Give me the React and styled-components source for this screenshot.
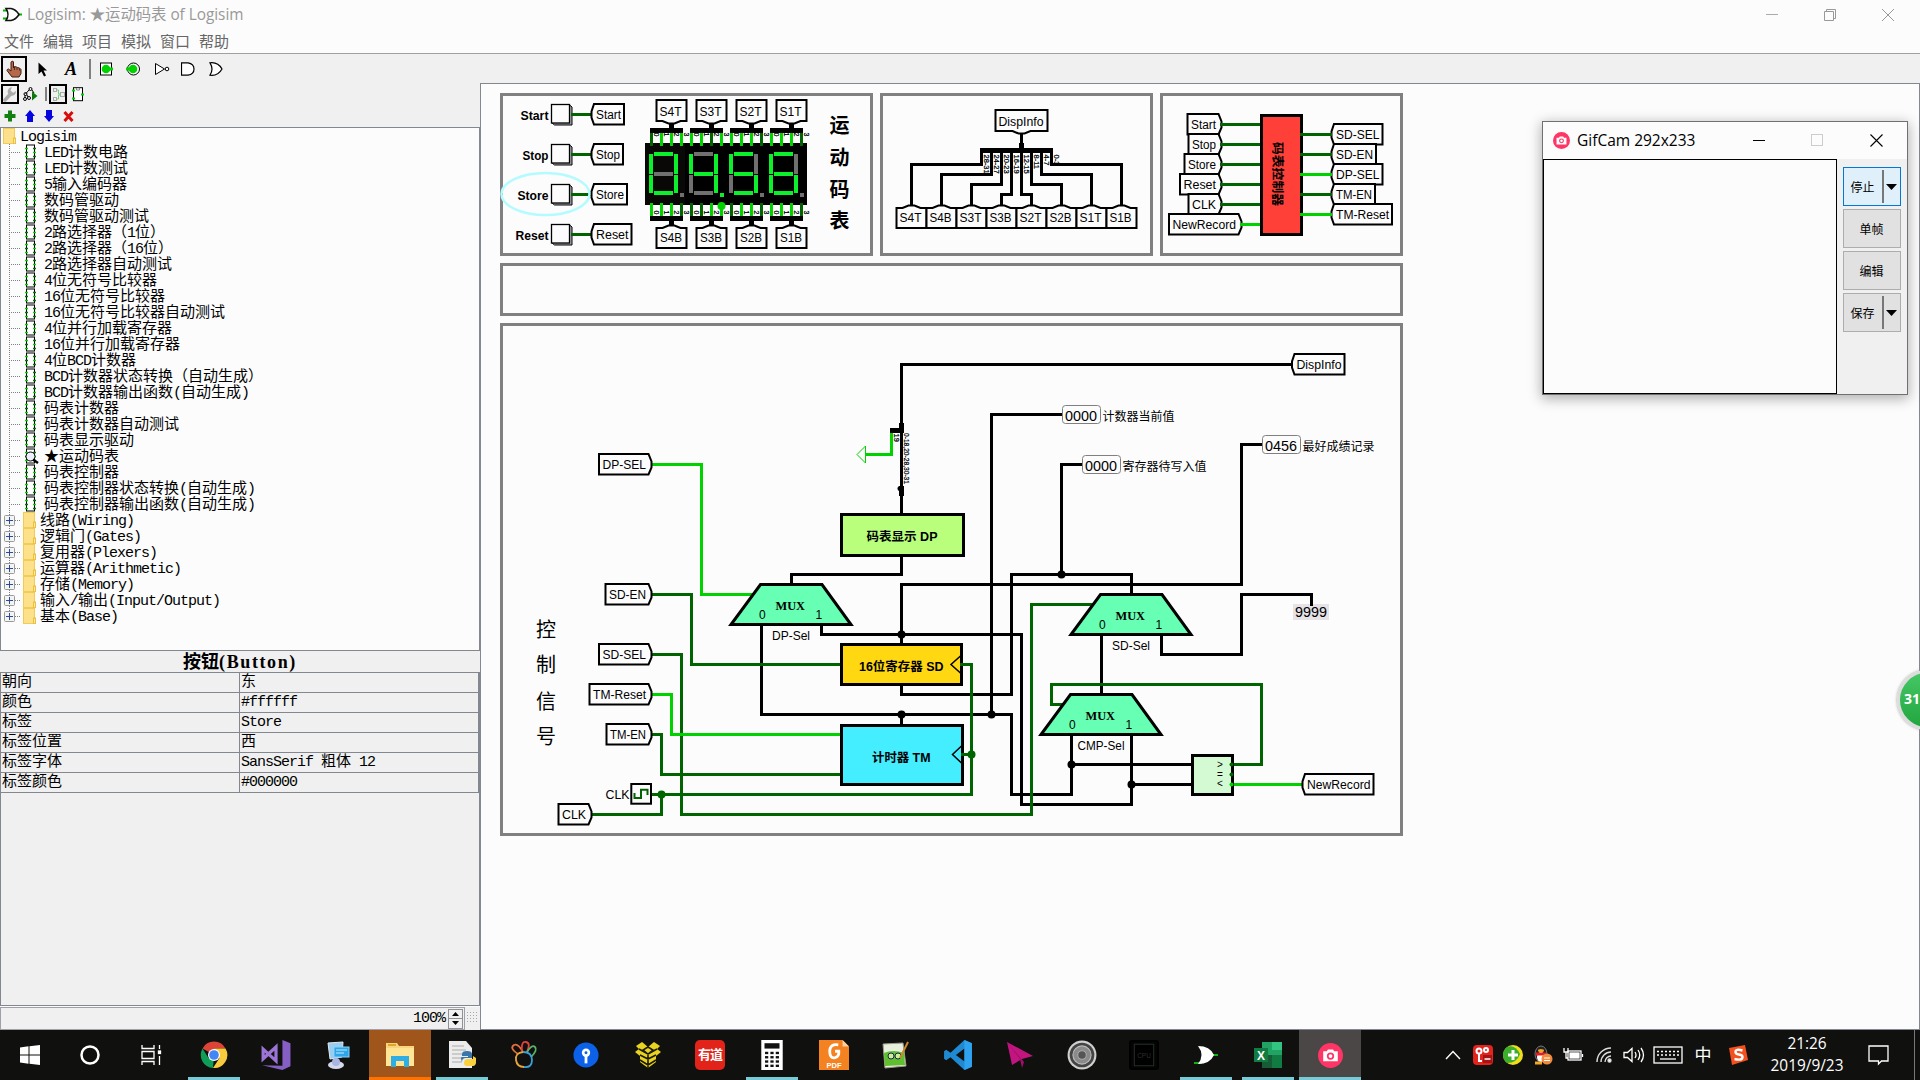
import React from "react";
import styled, { createGlobalStyle } from "styled-components";

const UI = '"Open Sans", "Noto Sans CJK SC", sans-serif';
const MONO = '"Liberation Mono", "Noto Sans CJK SC", monospace';
const SERIF = '"Liberation Serif", "Noto Sans CJK SC", serif';
const SANS = '"Liberation Sans", "Noto Sans CJK SC", sans-serif';
const DARK = "#006400";
const LIT = "#00d200";
const GREY = "#828790";

const Global = createGlobalStyle`
  * { box-sizing: border-box; }
  html, body { margin: 0; padding: 0; overflow: hidden; background: #fcfcfc; }
  svg { display: block; flex: none; }
`;

const Screen = styled.div`
  position: relative;
  width: 1920px;
  height: 1080px;
  overflow: hidden;
  display: flex;
  flex-direction: column;
  background: #fcfcfc;
  color: #000;
`;

/* ---------- window chrome ---------- */

const TitleBar = styled.header`
  height: 29px;
  padding: 0 24px 0 3px;
  display: flex;
  align-items: center;
  gap: 5px;
  font: 15.4px/29px ${UI};
  color: #999;
`;
const TitleText = styled.span`
  flex: 1;
  white-space: nowrap;
  letter-spacing: -0.04px;
`;
const Controls = styled.div`
  display: flex;
  gap: 42px;
`;
const MenuBar = styled.nav`
  height: 25px;
  padding: 0 4px;
  display: flex;
  gap: 9px;
  border-bottom: 1px solid #a0a0a0;
  font: 15px/25px ${UI};
  color: #666;
`;
const ToolBar = styled.div`
  height: 29px;
  padding: 2px 1px 1px;
  display: flex;
  align-items: center;
  background: #f0f0f0;
`;
const Work = styled.div`
  height: 947px;
  display: flex;
`;
const Side = styled.aside`
  width: 480px;
  display: flex;
  flex-direction: column;
  background: #f0f0f0;
`;
const SideBar = styled.div`
  height: 22px;
  padding-left: ${(p) => p.$pad}px;
  display: flex;
  align-items: center;
  gap: ${(p) => p.$gap || 0}px;
`;
const IconBox = styled.div`
  width: ${(p) => p.$w}px;
  height: ${(p) => p.$h}px;
  margin-right: ${(p) => p.$mr || 0}px;
  border: ${(p) => (p.$on ? "2px solid #000" : "0")};
  display: flex;
  align-items: center;
  justify-content: center;
`;
const Divider = styled.div`
  width: 2px;
  height: ${(p) => p.$h}px;
  margin-right: ${(p) => p.$mr}px;
  background: #808080;
`;

/* ---------- explorer tree ---------- */

const Tree = styled.div`
  height: 524px;
  border: 1px solid ${GREY};
  background: #fcfcfc;
  font: 15px/16px ${MONO};
`;
const TreeRow = styled.div`
  height: 16px;
  padding-left: ${(p) => p.$pad}px;
  display: flex;
  align-items: center;
  gap: ${(p) => p.$gap}px;
  white-space: nowrap;
`;
const TreeText = styled.span`
  padding-top: 3px;
  padding-left: ${(p) => p.$in || 0}px;
`;
const Latin = styled.span`
  letter-spacing: ${(p) => p.$sp || "-1px"};
`;

/* ---------- attribute table ---------- */

const AttrTitle = styled.div`
  height: 21px;
  text-align: center;
  font: bold 18px/22px ${SERIF};
`;
const AttrPane = styled.div`
  flex: 1;
  border: 1px solid ${GREY};
`;
const AttrRow = styled.div`
  display: grid;
  grid-template-columns: 239px 239px;
  height: 20px;
  border-bottom: 1px solid ${GREY};
  font: 15px/19px ${MONO};
  white-space: pre;
`;
const AttrCell = styled.div`
  padding-left: 1px;
  border-right: 1px solid ${GREY};
`;
const Status = styled.div`
  height: 24px;
  display: flex;
  border-top: 1px solid #fcfcfc;
`;
const ZoomField = styled.div`
  width: 465px;
  border: 1px solid #a0a0a8;
  padding: 1px 1px 1px 0;
  display: flex;
  align-items: center;
  justify-content: flex-end;
  gap: 3px;
  font: 15px/20px ${MONO};
`;
const Spinner = styled.div`
  width: 15px;
  height: 20px;
  display: grid;
  grid-template-rows: 1fr 1fr;
  border: 1px solid #909098;
`;
const SpinButton = styled.div`
  display: flex;
  align-items: center;
  justify-content: center;
  border-bottom: ${(p) => (p.$top ? "1px solid #909098" : "0")};
`;
const Grip = styled.div`
  width: 13px;
  margin: 4px 0 6px 1px;
  background: radial-gradient(#a8a8a8 0.8px, transparent 1px) 0 0 / 3px 3px;
`;

const CanvasPane = styled.main`
  flex: 1;
  border: 1px solid ${GREY};
  background: #fcfcfc;
  overflow: hidden;
`;

/* ---------- GifCam window ---------- */

const GifWindow = styled.section`
  position: absolute;
  left: 1542px;
  top: 121px;
  width: 366px;
  height: 274px;
  border: 1px solid #707070;
  background: #fcfcfc;
  box-shadow: 0 3px 12px 1px rgba(0, 0, 0, 0.3);
  display: flex;
  flex-direction: column;
`;
const GifTitle = styled.div`
  height: 37px;
  padding: 0 24px 0 10px;
  display: flex;
  align-items: center;
  font: 15.5px/37px ${UI};
`;
const GifName = styled.span`
  flex: 1;
  padding-left: 7px;
`;
const GifButtons = styled.div`
  display: flex;
  align-items: center;
  gap: 46px;
`;
const GifBody = styled.div`
  flex: 1;
  display: flex;
`;
const GifView = styled.div`
  width: 294px;
  border: 1px solid #000;
`;
const GifSide = styled.div`
  flex: 1;
  padding: 8px 6px;
  display: flex;
  flex-direction: column;
  gap: 3px;
  background: #f0f0f0;
`;
const GifBtn = styled.div`
  height: 39px;
  border: 1px solid ${(p) => (p.$on ? "#0078d7" : "#adadad")};
  background: ${(p) => (p.$on ? "#e0f0fb" : "#e1e1e1")};
  display: flex;
  align-items: center;
  font: 12px/37px ${SANS};
`;
const GifLabel = styled.span`
  flex: 1;
  padding: 3px 1px 0 0;
  text-align: center;
`;
const SplitMark = styled.span`
  width: 18px;
  height: 33px;
  border-left: 2px solid #777;
  display: flex;
  align-items: center;
  padding-left: 2px;
`;

const Ball = styled.div`
  position: absolute;
  left: 1897px;
  top: 670px;
  width: 60px;
  height: 60px;
  border: 3px solid #dcdcdc;
  border-radius: 50%;
  background: linear-gradient(#45c765, #22a63f);
  box-shadow: 0 0 3px #999;
  color: #fff;
  font: bold 14px/52px ${UI};
  padding-left: 4px;
`;

/* ---------- taskbar ---------- */

const TaskBar = styled.footer`
  height: 50px;
  display: flex;
  background: #10100f;
  color: #fff;
`;
const Slot = styled.div`
  width: ${(p) => p.$w || 62}px;
  padding: 0 ${(p) => (p.$fill || !p.$line ? 0 : 5)}px;
  display: flex;
`;
const SlotFace = styled.div`
  flex: 1;
  display: flex;
  align-items: center;
  justify-content: center;
  background: ${(p) => p.$fill || "transparent"};
  border-bottom: 3px solid ${(p) => p.$line || "transparent"};
  border-top: 3px solid transparent;
`;
const Tray = styled.div`
  margin-left: auto;
  width: 482px;
  display: flex;
  align-items: center;
`;
const TrayItem = styled.div`
  width: ${(p) => p.$w || 30}px;
  display: flex;
  justify-content: center;
  font: 17px/50px ${UI};
`;
const Clock = styled.div`
  width: 102px;
  text-align: center;
  font: 15.400px/22px ${UI};
`;

/* ---------- text helper ---------- */

function Mixed({ text, sp }) {
  return (
    <span>
      {text.split(/([\x20-\x7e]+)/).filter(Boolean).map((t, i) =>
        /^[\x20-\x7e]/.test(t) ? <Latin key={i} $sp={sp}>{t}</Latin> : t
      )}
    </span>
  );
}

/* ---------- small icons ---------- */

const GateLogo = () => (
  <svg width="19" height="16" viewBox="0 0 19 16">
    <path d="M0 3.500h4M0 11.500h4M16 7.500h3" stroke="#00b400" strokeWidth="2" />
    <path d="M3 1.500h5q5 1 8 6q-3 5-8 6h-5q4-6 0-12z" fill="#fff" stroke="#111" strokeWidth="1.500" />
  </svg>
);
const HandIcon = () => (
  <svg width="16" height="18" viewBox="0 0 16 18">
    <path d="M5.500 1.500q1.500-1 2 .5v6l1-1.500 2 .5 1 0.500 2 .5 1.500 1.500v4l-2 3.500h-7l-5-6.500q0-1.500 1.500-1.500l2.500 2v-9z" fill="#b5694a" stroke="#3d1c10" />
    <path d="M8.500 7v3M11 7.500v2.500M13.500 8.500v2" stroke="#3d1c10" strokeWidth=".8" />
  </svg>
);
const ArrowIcon = () => (
  <svg width="10" height="15" viewBox="0 0 10 15"><path d="M0.500 0.500V12L3.500 9.500 6 14.500 8 13.500 5.500 8.500H9z" /></svg>
);
const LetterA = styled.span`
  font: italic bold 18px/20px "Liberation Serif", serif;
`;
const PinIcon = ({ round }) => (
  <svg width="15" height="14" viewBox="0 0 15 14">
    {round ? <circle cx="7.500" cy="7" r="6" fill="#fff" stroke="#000" /> : <rect x="1.500" y="1" width="11" height="12" fill="#fff" stroke="#000" />}
    <circle cx="7" cy="7" r="4.300" fill={LIT} />
    <path d={round ? "M0 7h5" : "M8 7h6"} stroke={LIT} strokeWidth="3" />
  </svg>
);
const NotIcon = () => (
  <svg width="15" height="14" viewBox="0 0 15 14">
    <path d="M.5 1.500V12.500L9.500 7z" fill="#fff" stroke="#000" /><circle cx="12" cy="7" r="1.800" fill="#fff" stroke="#000" />
  </svg>
);
const AndIcon = () => (
  <svg width="14" height="14" viewBox="0 0 14 14"><path d="M.5 .8H7q6 1 6 6.200t-6 6.200H.5z" fill="#fff" stroke="#000" strokeWidth="1.200" /></svg>
);
const OrIcon = () => (
  <svg width="14" height="14" viewBox="0 0 14 14"><path d="M1 .8q8-1 12 6.200q-4 7.200-12 6.200q4-6.200 0-12.400z" fill="#fff" stroke="#000" strokeWidth="1.200" /></svg>
);
const WrenchIcon = () => (
  <svg width="14" height="15" viewBox="0 0 14 15">
    <path d="M2 13L8 6.500" stroke="#aaa" strokeWidth="3.500" strokeLinecap="round" />
    <path d="M13 4a4.200 4.200 0 1 1-4-3.700L7.500 3.500l2.500 2.500z" fill="#aaa" />
  </svg>
);
const SimIcon = () => (
  <svg width="15" height="15" viewBox="0 0 15 15" fill="none" stroke="#000">
    <path d="M6 3L2.500 7M9 3l2 3M4 8l1 2M2 8v3" />
    <circle cx="7.500" cy="2" r="1.500" /><circle cx="2.500" cy="7" r="1.500" /><circle cx="2" cy="12" r="1.500" /><circle cx="6" cy="11" r="1.500" />
    <path d="M9 4.500l5.500 4.500-5.500 4.500z" fill="#0a7a0a" stroke="none" />
  </svg>
);
const LayoutIcon = () => (
  <svg width="13" height="15" viewBox="0 0 13 15" fill="none" stroke="#aaa">
    <rect x="1.500" y="1.500" width="3" height="3" /><rect x="1.500" y="10.500" width="3" height="3" /><rect x="8.500" y="5.500" width="4" height="4" />
    <path d="M4.500 3h2v4h2M4.500 12h2v-4h2" stroke="#7c7" />
  </svg>
);
const ChipIcon = () => (
  <svg width="13" height="15" viewBox="0 0 13 15">
    <rect x="1.500" y=".7" width="9" height="13" fill="#fff" stroke="#000" /><path d="M4.500 1v2h3V1" fill="none" stroke="#888" />
    <path d="M0 3.500h3M0 11.500h3M9 7.500h3" stroke={LIT} strokeWidth="2" />
  </svg>
);
const PlusIcon = () => <svg width="12" height="12" viewBox="0 0 12 12"><path d="M4 .5h4V4h3.500v4H8v3.500H4V8H.5V4H4z" fill="#118011" /></svg>;
const UpIcon = ({ down }) => (
  <svg width="10" height="12" viewBox="0 0 10 12"><path d={down ? "M2 0h6v6h2l-5 6-5-6h2z" : "M5 0l5 6H8v6H2V6H0z"} fill="#0505e0" /></svg>
);
const CrossIcon = () => <svg width="11" height="11" viewBox="0 0 11 11"><path d="M1.500 1l8 9M9.500 1l-8 9" stroke="#d80c0c" strokeWidth="3" /></svg>;

const Folder = () => (
  <svg width="13" height="16" viewBox="0 0 13 16">
    <rect x=".5" y=".5" width="11" height="15" fill="#fce08a" stroke="#f2ca55" /><rect x="10.500" y="10" width="2" height="5.500" fill="#fce9a8" stroke="#ecc040" />
  </svg>
);
const Guide = ({ end, plus }) => (
  <svg width="19" height="16" viewBox="0 0 19 16">
    <path d={end ? "M7.500 0V8" : "M7.500 0V16"} stroke="#808080" strokeDasharray="1 1" />
    <path d="M9 8.500H18" stroke="#808080" strokeDasharray="1 1" />
    {plus && (
      <g>
        <rect x="2.500" y="3.500" width="10" height="10" rx="1" fill="#f4f4f4" stroke="#9a9a9a" />
        <path d="M4 8.500h7M7.500 5v7" stroke="#2c4a9c" />
      </g>
    )}
  </svg>
);
const Circuit = ({ view }) => (
  <svg width="15" height="16" viewBox="0 0 15 16">
    <rect x="2.500" y="1" width="8" height="14" fill="#fff" stroke="#000" />
    <path d="M1 4.500h3M1 12.500h3M9 8.500h3" stroke={LIT} strokeWidth="1.500" />
    <path d="M1 8.500h3M9 4.500h3M9 12.500h3" stroke="#087008" strokeWidth="1.500" />
    {view && <g><circle cx="6.500" cy="8.500" r="4.500" fill="#eef" stroke="#000" /><path d="M9 11.500l5 3.500" stroke="#000" strokeWidth="2.400" /></g>}
  </svg>
);
const Tri = ({ up, w = 7, h = 4 }) => (
  <svg width={w} height={h} viewBox="0 0 8 4" preserveAspectRatio="none"><path d={up ? "M0 4L4 0L8 4z" : "M0 0L4 4L8 0z"} /></svg>
);

const WinMin = () => <svg width="12" height="12"><path d="M0 5.500H12" stroke="currentColor" /></svg>;
const CamIcon = ({ s }) => (
  <svg width={s} height={s} viewBox="0 0 24 24">
    <circle cx="12" cy="12" r="12" fill="#ff3566" />
    <path d="M5 8h3.500l1-1.800h5l1 1.800H19v9.500H5z" fill="#fff" /><circle cx="12" cy="12.500" r="3.500" fill="#ff3566" /><circle cx="12" cy="12.500" r="1.800" fill="#fff" />
  </svg>
);

/* ---------- circuit parts ---------- */

const Wire = ({ d, c = "#000", w = 3 }) => <path d={d} stroke={c} strokeWidth={w} fill="none" shapeRendering="crispEdges" />;
const Dot = ({ x, y, c = "#000" }) => <circle cx={x} cy={y} r="4" fill={c} />;
const T = ({ x, y, w, s = 12, b, f = SANS, children, a = "start", fill = "#000" }) => (
  <text x={x} y={y} fontFamily={f} fontSize={s} fontWeight={b ? "bold" : "normal"} textAnchor={a} fill={fill}
    textLength={w} lengthAdjust="spacingAndGlyphs">{children}</text>
);
const Tiny = ({ x, y, w, s = 7.500, children }) => (
  <text transform={`translate(${x} ${y}) rotate(90)`} fontFamily={SANS} fontSize={s} stroke="#000" strokeWidth=".25"
    textLength={w} lengthAdjust="spacingAndGlyphs">{children}</text>
);

const LABEL_W = {
  Start: 25, Stop: 24, Store: 28, Reset: 32.5, DispInfo: 45, "SD-SEL": 43.5, "SD-EN": 37,
  "DP-SEL": 43.5, "TM-EN": 36, "TM-Reset": 53, CLK: 24, NewRecord: 63.5,
};

function Tunnel({ x, y, dir, label, hw = 15, top }) {
  const w = LABEL_W[label] || 22;
  const o = { fill: "#fcfcfc", stroke: "#000", strokeWidth: 2 };
  if (dir === "w") {
    const r = x + w + 8;
    return (
      <g>
        <path d={`M${x + 3} ${y - 10.500}H${r}V${y + 10}H${x + 3}L${x + .5} ${y + 3}V${y - 3}Z`} {...o} />
        <T x={x + 5} y={y + 4.500} w={w}>{label}</T>
      </g>
    );
  }
  if (dir === "e") {
    const l = x - w - 9;
    return (
      <g>
        <path d={`M${x - 3} ${y - 10.500}H${l}V${y + 10}H${x - 3}L${x} ${y + 3}V${y - 3}Z`} {...o} />
        <T x={x - w - 5.500} y={y + 4.500} w={w}>{label}</T>
      </g>
    );
  }
  const s = dir === "n" ? 1 : -1;
  const near = y + s * 3.500;
  const far = y + s * (dir === "n" ? 23.500 : 24.500);
  return (
    <g>
      <path d={`M${x - hw} ${near}V${far}H${x + hw}V${near}H${x + 9}L${x + 3} ${y + s}H${x - 3}L${x - 9} ${near}Z`} {...o} />
      <T x={x - w / 2 - (top ? 1 : .5)} y={dir === "n" ? y + 17.500 : y - 8.500} w={w}>{label}</T>
    </g>
  );
}

const SEG = [
  [9, 9, 19, 4], [29, 11, 4, 19.500], [29, 32, 4, 18], [9, 48, 19, 4], [4, 32, 4, 18], [4, 11, 4, 19.500], [9, 28.700, 19, 4],
];
const DIGITS = [
  { on: [1, 1, 1, 1, 1, 1, 0], t: [0, 1, 1, 1], b: [1, 1, 1, 0] },
  { on: [0, 1, 1, 0, 0, 1, 1], dot: 1, t: [1, 1, 0, 1], b: [0, 0, 1, 1] },
  { on: [1, 0, 1, 1, 0, 1, 1], t: [1, 1, 1, 0], b: [0, 1, 1, 0] },
  { on: [1, 0, 1, 1, 1, 1, 1], t: [1, 1, 1, 0], b: [1, 1, 1, 0] },
];

function Digit({ i }) {
  const d = DIGITS[i];
  const x = 645 + i * 40;
  const c = x + 26.500;
  return (
    <g>
      <rect x={x} y="143" width="42" height="62" fill={i ? "#000" : "#0a0806"} />
      {SEG.map((s, k) => <rect key={k} x={x + s[0]} y={143 + s[1]} width={s[2]} height={s[3]} fill={d.on[k] ? "#0cf02c" : "#707070"} shapeRendering="crispEdges" />)}
      <rect x={x + 35} y="193" width="4" height="4" fill={d.dot ? "#0cf02c" : "#707070"} />
      <rect x={x + 5} y="128" width="33" height="5" /><rect x={x + 24} y="124" width="5" height="5" />
      <rect x={x + 5} y="216" width="33" height="5" /><rect x={x + 24} y="220" width="5" height="5" />
      {[0, 1, 2, 3].map((k) => (
        <g key={k}>
          <Wire d={`M${x + 6.500 + k * 10} 133V146`} c={d.t[k] ? LIT : DARK} />
          <Wire d={`M${x + 6.500 + k * 10} 203V216`} c={d.b[k] ? LIT : DARK} />
          <Tiny x={x + 9} y={132.500} s={7}>{k === 0 ? "0" : ""}</Tiny>
          {k > 0 && <Tiny x={x + 9 + k * 10} y={132.500} s={7}>{k}</Tiny>}
          <Tiny x={x + 9 + k * 10} y={210.500} s={7}>{k}</Tiny>
        </g>
      ))}
      <Tunnel x={c} y={124.500} dir="s" label={`S${4 - i}T`} top />
      <Tunnel x={c} y={224.500} dir="n" label={`S${4 - i}B`} />
    </g>
  );
}

const Button3D = ({ y, label, w }) => (
  <g>
    <T x={548.500 - w} y={y + 5} w={w} b>{label}</T>
    <path d={`M569 ${y - 10}l3 2.500V${y + 10.500}H554.500l-3-2.500z`} fill="#a8a8b0" stroke="#000" strokeWidth="1" />
    <rect x="551.500" y={y - 10} width="18" height="18.500" fill="#fcfcfc" stroke="#000" strokeWidth="1.300" />
    <Wire d={`M571 ${y}H592`} c={DARK} />
    <Tunnel x={591} y={y} dir="w" label={label} />
  </g>
);

const Mux = ({ x, y, label, lw }) => (
  <g>
    <path d={`M${x - 30.500} ${y}H${x + 31}L${x + 60} ${y + 40}H${x - 60}Z`} fill="#66ffb3" stroke="#000" strokeWidth="3" />
    <T x={x - 15.500} y={y + 25} w={29.500} f='"Liberation Serif", serif' b>MUX</T>
    <T x={x - 32} y={y + 34.500}>0</T>
    <T x={x + 24.500} y={y + 34.500}>1</T>
    <T x={x - lw / 2} y={y + 55} w={lw}>{label}</T>
  </g>
);

const Block = ({ x, y, w, h, fill, label, tx, tw, ty }) => (
  <g>
    <rect x={x + 1.500} y={y + 1.500} width={w - 3} height={h - 3} fill={fill} stroke="#000" strokeWidth="3" shapeRendering="crispEdges" />
    {label && <T x={tx} y={ty} w={tw} b>{label}</T>}
  </g>
);

const Probe = ({ x, y, v, label, w }) => (
  <g>
    <rect x={x + .5} y={y + .5} width="38" height="18" rx="3" fill="#fcfcfc" stroke="#808080" />
    <T x={x + 3} y={y + 15.500} w={32} s={14}>{v}</T>
    <T x={x + 40.500} y={y + 16} w={w}>{label}</T>
  </g>
);

const Frame = ({ x, y, r, b }) => (
  <rect x={x} y={y} width={r - x} height={b - y} fill="none" stroke="#808080" strokeWidth="3" shapeRendering="crispEdges" />
);

const SPLIT = ["28-31", "24-27", "20-23", "16-19", "12-15", "8-11", "4-7", "0-3"];
const SPLIT_OUT = ["S4T", "S4B", "S3T", "S3B", "S2T", "S2B", "S1T", "S1B"];

function CircuitCanvas() {
  return (
    <svg width="1438" height="945" viewBox="481 84 1438 945">
      <Frame x={501.500} y={94.500} r={871.500} b={254.500} />
      <Frame x={881.500} y={94.500} r={1151.500} b={254.500} />
      <Frame x={1161.500} y={94.500} r={1401.500} b={254.500} />
      <Frame x={501.500} y={264.500} r={1401.500} b={314.500} />
      <Frame x={501.500} y={324.500} r={1401.500} b={834.500} />

      <Button3D y={114.500} label="Start" w={28} />
      <Button3D y={154.500} label="Stop" w={26} />
      <Button3D y={194.500} label="Store" w={31} />
      <Button3D y={234.500} label="Reset" w={33} />
      <ellipse cx="545.500" cy="194" rx="44" ry="21" fill="none" stroke="#b4fbff" strokeWidth="2.500" />
      {[0, 1, 2, 3].map((i) => <Digit key={i} i={i} />)}
      <Dot x={721.500} y={206} c={LIT} />
      {["运", "动", "码", "表"].map((t, i) => <T key={t} x={839.500} y={[133, 165, 197, 228][i]} s={20} b a="middle">{t}</T>)}

      <Wire d="M1021.500 134V150" /><rect x="1019" y="143" width="5" height="6" />
      <rect x="980" y="148" width="73" height="5" />
      {SPLIT.map((t, i) => {
        const x = 981.500 + i * 10;
        const o = 911.500 + i * 30;
        const y = i < 4 ? 164.500 + i * 10 : 194.500 - (i - 4) * 10;
        return (
          <g key={t}>
            <Wire d={`M${x} 150V${y}H${o}V205`} />
            <Tiny x={x + 2.500} y={154.500}>{t}</Tiny>
          </g>
        );
      })}
      {SPLIT_OUT.map((t, i) => <Tunnel key={t} x={911.500 + i * 30} y={204.500} dir="n" label={t} top />)}
      <Tunnel x={1021.500} y={134.500} dir="s" label="DispInfo" hw={26} />

      {["Start", "Stop", "Store", "Reset", "CLK"].map((t, i) => (
        <g key={t}>
          <Tunnel x={1221.500} y={124.500 + i * 20} dir="e" label={t} />
          <Wire d={`M1220 ${124.500 + i * 20}H1261`} c={DARK} />
        </g>
      ))}
      <Tunnel x={1241.500} y={224.500} dir="e" label="NewRecord" />
      <Wire d="M1240 224.500H1261" c={LIT} />
      {["SD-SEL", "SD-EN", "DP-SEL", "TM-EN", "TM-Reset"].map((t, i) => (
        <Tunnel key={t} x={1331} y={134.500 + i * 20} dir="w" label={t} />
      ))}
      <rect x="1261.500" y="115.500" width="40" height="119" fill="#ff4038" stroke="#000" strokeWidth="3" />
      {[DARK, DARK, LIT, DARK, LIT].map((c, i) => <Wire key={i} d={`M1300 ${134.500 + i * 20}H1332`} c={c} />)}
      <text transform="translate(1273 142) rotate(90)" fontFamily={SANS} fontSize="12.500" fontWeight="bold" textLength="64" lengthAdjust="spacingAndGlyphs">码表控制器</text>

      <Wire d="M901.500 424V364.500H1291.500" />
      <Wire d="M901.500 430V513" />
      <rect x="899" y="423" width="5" height="10" /><rect x="890" y="428" width="14" height="5" />
      <rect x="899" y="486" width="5" height="10" /><circle cx="900" cy="488.500" r="2.500" />
      <Wire d="M891.500 433V454.500H866" c={LIT} />
      <path d="M857 454.500L865.500 446V463Z" fill="#fcfcfc" stroke={LIT} />
      <Tiny x={894} y={433.500}>19</Tiny>
      <Tiny x={904} y={433} w={51}>0-18,20-28,30-31</Tiny>
      <Tunnel x={1291.500} y={364.500} dir="w" label="DispInfo" />

      <Wire d="M901.500 556V574.500H791.500V584" />
      <Wire d="M761.500 625V714.500H1011.500V794.500H1071.500V735" />
      <Wire d="M821.500 625V634.500H1021.500V804.500H1131.500V735" />
      <Wire d="M901.500 645V584.500H1241.500V444.500H1263" />
      <Wire d="M901.500 685V694.500H1011.500V574.500H1131.500V594" />
      <Wire d="M1061.500 574.500V464.500H1083" />
      <Wire d="M991.500 714.500V414.500H1063" />
      <Wire d="M901.500 714V726" />
      <Wire d="M1161.500 635V654.500H1241.500V594.500H1311.500V606" />
      <Wire d="M1101.500 635V694" />
      <Wire d="M1071.500 764.500H1192" /><Wire d="M1131.500 784.500H1192" />

      <Wire d="M650 464.500H701.500V594.500H754" c={LIT} />
      <Wire d="M650 594.500H691.500V664.500H841" c={DARK} />
      <Wire d="M650 654.500H681.500V814.500H1031.500V604.500H1093" c={DARK} />
      <Wire d="M650 694.500H671.500V734.500H841" c={LIT} />
      <Wire d="M650 734.500H661.500V774.500H841" c={DARK} />
      <Wire d="M650 794.500H971.500V664.500H961" c={DARK} />
      <Wire d="M661.500 794.500V814.500H590" c={DARK} />
      <Wire d="M1064 704.500H1051.500V684.500H1261.500V764.500H1231" c={DARK} />
      <Wire d="M1232 784.500H1302" c={LIT} />

      <Mux x={791} y={584.500} label="DP-Sel" lw={38} />
      <Mux x={1131} y={594.500} label="SD-Sel" lw={38} />
      <Mux x={1101} y={694.500} label="CMP-Sel" lw={47} />
      <Block x={840} y={513} w={125} h={44} fill="#b9ff7c" label="码表显示 DP" tx={866.500} tw={71} ty={541} />
      <Block x={840} y={643} w={123} h={43} fill="#ffd812" label="16位寄存器 SD" tx={859} tw={84.500} ty={671} />
      <Block x={840} y={724} w={124} h={62} fill="#44eeff" label="计时器 TM" tx={872} tw={58.500} ty={761.500} />
      <path d="M961 655.500L951 664.500L961 673.500M962 745.500L952.500 754.500L962 763.500" fill="none" stroke="#000" strokeWidth="1.500" />
      <Wire d="M960 664.500H971.500M961 754.500H971.500" c={DARK} />
      <Block x={1191} y={754} w={43} h={42} fill="#d4fad4" />
      <T x={1217} y={767.500} s={10}>&gt;</T><T x={1217} y={777.500} s={10}>=</T><T x={1217} y={787} s={10}>&lt;</T>
      <circle cx="1231.500" cy="764.500" r="2" fill={DARK} /><circle cx="1231.500" cy="774.500" r="2" fill={DARK} /><circle cx="1231.500" cy="784.500" r="2" fill={LIT} />

      <Dot x={901.500} y={634.500} /><Dot x={901.500} y={714.500} /><Dot x={991.500} y={714.500} />
      <Dot x={1061.500} y={574.500} /><Dot x={1071.500} y={764.500} /><Dot x={1131.500} y={784.500} />
      <Dot x={971.500} y={754.500} c={DARK} /><Dot x={661.500} y={794.500} c={DARK} />

      <Tunnel x={651.500} y={464.500} dir="e" label="DP-SEL" />
      <Tunnel x={651.500} y={594.500} dir="e" label="SD-EN" />
      <Tunnel x={651.500} y={654.500} dir="e" label="SD-SEL" />
      <Tunnel x={651.500} y={694.500} dir="e" label="TM-Reset" />
      <Tunnel x={651.500} y={734.500} dir="e" label="TM-EN" />
      <Tunnel x={591.500} y={814.500} dir="e" label="CLK" />
      <Tunnel x={1302} y={784.500} dir="w" label="NewRecord" />
      <T x={605.500} y={799} w={24}>CLK</T>
      <rect x="631.300" y="784" width="19.700" height="19.700" fill="#fcfcfc" stroke="#000" strokeWidth="2" />
      <path d="M634.500 793V798H641V789.800H647.500V795" fill="none" stroke={DARK} strokeWidth="2" />

      <Probe x={1062} y={405} v="0000" label="计数器当前值" w={72} />
      <Probe x={1082} y={455} v="0000" label="寄存器待写入值" w={84} />
      <Probe x={1262} y={435} v="0456" label="最好成绩记录" w={72} />
      <rect x="1293" y="604" width="36" height="16" fill="#e6e2e6" />
      <Wire d="M1311.500 600V606" />
      <T x={1295} y={617} w={32} s={14}>9999</T>
      {["控", "制", "信", "号"].map((t, i) => <T key={t} x={546} y={[637, 672, 709, 744][i]} s={20} a="middle">{t}</T>)}
    </svg>
  );
}

/* ---------- taskbar icons ---------- */

const I = ({ s = 28, children }) => <svg width={s} height={s} viewBox="0 0 28 28">{children}</svg>;
const YD = styled.span`
  width: 30px;
  height: 30px;
  border-radius: 5px;
  background: #e2231a;
  text-align: center;
  letter-spacing: -1px;
  font: bold 13px/29px ${SANS};
`;

const TASKS = [
  { line: "#76cbd6", icon: (
    <I><path d="M14 14L2.500 7.500A13 13 0 0 1 25.500 7.500H14z" fill="#db4437" /><path d="M14 14L13 27A13 13 0 0 1 2.500 7.500L8.500 17z" fill="#0f9d58" /><path d="M14 14l5.500 3L13 27A13 13 0 0 0 25.500 7.500H14z" fill="#f8cb3c" /><circle cx="14" cy="14" r="6" fill="#fff" /><circle cx="14" cy="14" r="4.800" fill="#4285f4" /></I>) },
  { icon: <I s={30}><path d="M20 0l7.500 3V24.500L20 28 1 23.500l19 .5z" fill="#865fc5" /><path d="M2 8.500L14 19.500V6.500L2 17.500z" fill="none" stroke="#9b74d6" strokeWidth="3" /></I> },
  { icon: <I><path d="M4 2l15-1-1 15-12 2z" fill="#9ccdf0" stroke="#dfeaf2" /><rect x="10" y="6" width="15" height="10" fill="#2da6ea" stroke="#8bd3f8" /><path d="M12 9h11M12 12h8" stroke="#c4ecff" /><ellipse cx="12" cy="24" rx="8" ry="4" fill="#d5d9ea" /><circle cx="12" cy="21" r="4" fill="#aab5e4" /></I> },
  { fill: "#a0561b", line: "#ff7200", icon: <I><path d="M0 2h11l2 3h15v20H0z" fill="#f8d77c" /><path d="M0 7h28v18H0z" fill="#ffe594" /><path d="M5 26V15h18v11h-5v-6h-8v6z" fill="#2faee6" /><path d="M2 3h8v2H2z" fill="#e0a52c" /></I> },
  { line: "#76cbd6", icon: <I><path d="M1 0h17l6 7v20H1z" fill="#ececec" /><path d="M4 5h12M4 9h14M4 13h10M4 17h10M4 21h10" stroke="#aaa" /><path d="M14 13q0-3 5-3t5 3v4h-6q-4 0-4 4-2-5 0-5h6v-1h-6z" fill="#3977ab" /><path d="M28 17q1 8-3 8h-6q-3 0-3-3 0-4 4-4h5v-3z" fill="#fbd03e" /></I> },
  { icon: (
    <I>
      <g fill="none" strokeWidth="1.800">
        <path d="M8 13Q-1 7 4 4q4-2 9 7" stroke="#e5703d" />
        <path d="M12 10Q11 0 16 1t1 10" stroke="#e5403d" />
        <path d="M17 11q5-8 8-5t-4 10" stroke="#58b368" />
        <path d="M13 11q-8 1-7 8t8 7" stroke="#e8a33a" />
        <path d="M13 11q9 0 9 8t-8 7" stroke="#3aa0d8" />
      </g>
    </I>) },
  { icon: <I s={26}><circle cx="14" cy="14" r="13.500" fill="#0c61e8" /><circle cx="14" cy="11.500" r="4.500" fill="#fff" /><path d="M12.500 14h3v9h-3z" fill="#fff" /><circle cx="14" cy="11.500" r="1.600" fill="#0c61e8" /></I> },
  { icon: (
    <I>
      <path d="M14 6L20 1l6 4-3 3 4 3-5 4v6l-8 6-8-6v-6l-5-4 4-3-3-3 6-4z" fill="#e9d321" />
      <path d="M5 8l9 5 9-5M14 6l-5 3 5 4 5-4zM6 14l8 4 8-4M14 13v14M6 19l8 5 8-5" fill="none" stroke="#1d1b04" strokeWidth="1.600" />
    </I>) },
  { icon: <YD>有道</YD> },
  { line: "#76cbd6", icon: <I s={30}><path d="M4 0h20v28H4z" fill="#fff" /><path d="M7 3h14v5H7z" fill="#111" /><g fill="#111">{[11, 15, 19, 23].map((y) => [7.500, 12.500, 17.500].map((x) => <rect key={`${x}${y}`} x={x} y={y} width="3" height="2.200" />))}</g></I> },
  { icon: <I s={30}><path d="M0 0h22l6 6v22H0z" fill="#f58220" /><path d="M22 0l6 6h-6z" fill="#ffd2a0" /><path d="M18 4.500q-8-1-8 6t5 6q4-1 3.500-6h-3.500" fill="none" stroke="#fff" strokeWidth="2.600" /><text x="14" y="26.500" fontSize="7" fontWeight="bold" fontFamily={SANS} fill="#fff" textAnchor="middle">PDF</text></I> },
  { icon: <I><path d="M1 3l20-1 3 23-21 2z" fill="#e7f0dc" stroke="#9a9a8a" /><path d="M2 12q9-4 20 0l1 12-20 1z" fill="#5fbf2e" /><circle cx="9" cy="15" r="3" fill="#c7f29a" stroke="#225" /><circle cx="16" cy="15" r="3" fill="#c7f29a" stroke="#225" /><path d="M26 1L18 17" stroke="#c98a32" strokeWidth="2" /></I> },
  { icon: <I s={30}><path d="M20 0l7 3v22l-7 3L7 16l-4 3-2-1.500V10.500L3 9l4 3z" fill="#1f8ad2" /><path d="M20 8l-8 6 8 6z" fill="#10100f" /><path d="M20 0l7 3v22l-7 3z" fill="#2fa2ef" /></I> },
  { icon: <I><path d="M1 1l26 14-11 3-10 6z" fill="#c2157f" /><path d="M1 1l13 17 2 9 2-6" fill="#a00f68" /></I> },
  { icon: <I s={30}><circle cx="14" cy="14" r="13.500" fill="#d0d0d0" /><circle cx="14" cy="14" r="11.500" fill="#444" /><circle cx="14" cy="14" r="8.500" fill="#8a8a8a" stroke="#bbb" /><circle cx="14" cy="14" r="4" fill="#555" stroke="#aaa" /></I> },
  { icon: <I s={30}><rect x="1" y="1" width="26" height="26" rx="2" fill="#050505" stroke="#000" strokeWidth="2" /><rect x="5" y="4" width="18" height="20" fill="#000" stroke="#222b22" /><text x="14" y="16.500" fontSize="6" fontFamily={SANS} fill="#2e2e2e" textAnchor="middle">CPU</text></I> },
  { line: "#76cbd6", icon: <I><path d="M2 22h8M20 14h6" stroke="#12b012" strokeWidth="2" /><path d="M6 5q12 0 16 9q-4 9-16 9q7-9 0-18z" fill="#fff" /></I> },
  { line: "#76cbd6", icon: <I><path d="M8 1h20v26H8z" fill="#21a366" /><path d="M18 1h10v8H18z" fill="#33c481" /><path d="M8 14h10v13H8z" fill="#185c37" /><path d="M18 14h10v13H18z" fill="#107c41" /><rect x="0" y="7" width="14" height="14" fill="#107c41" /><text x="7" y="18.500" fontSize="12" fontWeight="bold" fontFamily={SANS} fill="#fff" textAnchor="middle">X</text></I> },
  { fill: "#4b4747", line: "#76cbd6", icon: <CamIcon s={25} /> },
];

const ITEMS = [
  "LED计数电路", "LED计数测试", "5输入编码器", "数码管驱动", "数码管驱动测试", "2路选择器（1位）", "2路选择器（16位）",
  "2路选择器自动测试", "4位无符号比较器", "16位无符号比较器", "16位无符号比较器自动测试", "4位并行加载寄存器",
  "16位并行加载寄存器", "4位BCD计数器", "BCD计数器状态转换（自动生成）", "BCD计数器输出函数(自动生成)", "码表计数器",
  "码表计数器自动测试", "码表显示驱动", "★运动码表", "码表控制器", "码表控制器状态转换(自动生成)", "码表控制器输出函数(自动生成)",
];
const LIBS = ["线路(Wiring)", "逻辑门(Gates)", "复用器(Plexers)", "运算器(Arithmetic)", "存储(Memory)", "输入/输出(Input/Output)", "基本(Base)"];
const ATTRS = [
  ["朝向", "东"], ["颜色", "#ffffff"], ["标签", "Store"], ["标签位置", "西"], ["标签字体", "SansSerif 粗体 12"], ["标签颜色", "#000000"],
];

export default function App() {
  return (
    <Screen>
      <Global />
      <TitleBar>
        <GateLogo />
        <TitleText>Logisim: ★运动码表 of Logisim</TitleText>
        <Controls>
          <svg width="16" height="14"><path d="M2 6.500H14" stroke="#aaa" /></svg>
          <svg width="16" height="14" fill="none" stroke="#999"><path d="M2.500 3.500h9v9h-9zM4.500 3.500v-2h9v9h-2" /></svg>
          <svg width="16" height="14" stroke="#999"><path d="M2 1l12 12M14 1L2 13" /></svg>
        </Controls>
      </TitleBar>
      <MenuBar>{["文件", "编辑", "项目", "模拟", "窗口", "帮助"].map((m) => <span key={m}>{m}</span>)}</MenuBar>
      <ToolBar>
        <IconBox $w={26} $h={26} $mr={6} $on><HandIcon /></IconBox>
        <IconBox $w={20} $h={26} $mr={10}><ArrowIcon /></IconBox>
        <IconBox $w={16} $h={26} $mr={10}><LetterA>A</LetterA></IconBox>
        <Divider $h={20} $mr={8} />
        <IconBox $w={15} $h={26} $mr={12}><PinIcon /></IconBox>
        <IconBox $w={15} $h={26} $mr={14}><PinIcon round /></IconBox>
        <IconBox $w={15} $h={26} $mr={11}><NotIcon /></IconBox>
        <IconBox $w={14} $h={26} $mr={14}><AndIcon /></IconBox>
        <IconBox $w={14} $h={26}><OrIcon /></IconBox>
      </ToolBar>
      <Work>
        <Side>
          <SideBar $pad={1}>
            <IconBox $w={18} $h={20} $mr={4} $on><WrenchIcon /></IconBox>
            <IconBox $w={15} $h={20} $mr={7}><SimIcon /></IconBox>
            <Divider $h={14} $mr={2} />
            <IconBox $w={18} $h={20} $mr={5} $on><LayoutIcon /></IconBox>
            <IconBox $w={13} $h={20}><ChipIcon /></IconBox>
          </SideBar>
          <SideBar $pad={4} $gap={9}><PlusIcon /><UpIcon /><UpIcon down /><CrossIcon /></SideBar>
          <Tree>
            <TreeRow $pad={2} $gap={4}><Folder /><TreeText><Mixed text="Logisim" /></TreeText></TreeRow>
            {ITEMS.map((t) => (
              <TreeRow key={t} $pad={1} $gap={3}><Guide /><Circuit view={t[0] === "★"} /><TreeText $in={2}><Mixed text={t} /></TreeText></TreeRow>
            ))}
            {LIBS.map((t, i) => (
              <TreeRow key={t} $pad={1} $gap={2}><Guide plus end={i === 6} /><Folder /><TreeText $in={2}><Mixed text={t} /></TreeText></TreeRow>
            ))}
          </Tree>
          <AttrTitle><Mixed text="按钮(Button)" sp="1.6px" /></AttrTitle>
          <AttrPane>
            {ATTRS.map(([k, v]) => (
              <AttrRow key={k}><AttrCell>{k}</AttrCell><AttrCell><Mixed text={v} /></AttrCell></AttrRow>
            ))}
          </AttrPane>
          <Status>
            <ZoomField>
              <Mixed text="100%" />
              <Spinner><SpinButton $top><Tri up /></SpinButton><SpinButton><Tri /></SpinButton></Spinner>
            </ZoomField>
            <Grip />
          </Status>
        </Side>
        <CanvasPane><CircuitCanvas /></CanvasPane>
      </Work>
      <TaskBar>
        <Slot $w={60}><SlotFace><svg width="20" height="20" fill="#fff"><path d="M0 2.500l8.500-1.200v8.200H0zM9.500 1.200L20 0v9.500H9.500zM0 10.500h8.500v8.200L0 17.500zM9.500 10.500H20V20L9.500 18.800z" /></svg></SlotFace></Slot>
        <Slot $w={60}><SlotFace><svg width="20" height="20"><circle cx="10" cy="10" r="8.500" fill="none" stroke="#fff" strokeWidth="2.500" /></svg></SlotFace></Slot>
        <Slot $w={63}><SlotFace><svg width="22" height="20" fill="none" stroke="#fff" strokeWidth="1.300"><path d="M1 0v3.500h12V0M1 20v-3.500h12V20M1 6.500h12v7H1zM18.500 0v4M18.500 11v9" /><rect x="17.500" y="6" width="2" height="2.500" fill="#fff" /></svg></SlotFace></Slot>
        {TASKS.map((t, i) => (
          <Slot key={i} $fill={t.fill} $line={t.line}><SlotFace $fill={t.fill} $line={t.line}>{t.icon}</SlotFace></Slot>
        ))}
        <Tray>
          <TrayItem><svg width="16" height="10" fill="none" stroke="#fff" strokeWidth="1.400"><path d="M1 9l7-7.500L15 9" /></svg></TrayItem>
          <TrayItem><svg width="20" height="20"><rect width="20" height="20" rx="4" fill="#e3241d" /><g fill="none" stroke="#fff" strokeWidth="2"><circle cx="6" cy="6" r="2.500" /><circle cx="13" cy="5" r="2" /><path d="M6 9v7h3" /></g><rect x="10" y="10" width="9" height="8" fill="#a31515" /><path d="M11.500 14h6" stroke="#fff" strokeWidth="1.500" /></svg></TrayItem>
          <TrayItem><svg width="20" height="20"><circle cx="10" cy="10" r="10" fill="#f1dc1e" /><path d="M4 2a10 10 0 0 0 0 16q10 0 13-9Q12-1 4 2z" fill="#3cae2c" /><path d="M10 5v10M5 10h10" stroke="#fff" strokeWidth="3" /></svg></TrayItem>
          <TrayItem><svg width="20" height="20"><ellipse cx="8" cy="9" rx="6" ry="8" fill="#222" stroke="#777" /><ellipse cx="8" cy="12" rx="4" ry="5" fill="#fff" /><ellipse cx="8" cy="5.500" rx="3" ry="1.500" fill="#f5a623" /><path d="M3 9h10" stroke="#e02020" strokeWidth="3" /><path d="M2 18h7" stroke="#f5a623" strokeWidth="3" /><circle cx="14" cy="14" r="5.500" fill="#f08a3c" /><path d="M11 13h6M11 15.500h6" stroke="#fff" /></svg></TrayItem>
          <TrayItem><svg width="22" height="18" fill="none" stroke="#fff" strokeWidth="1.300"><rect x="6" y="5" width="13" height="9" /><rect x="8" y="7" width="9" height="5" fill="#fff" /><path d="M20.500 8v3M2 2v4h4V2M4 6v6h2" /></svg></TrayItem>
          <TrayItem $w={31}><svg width="18" height="18" fill="none" stroke="#ddd" strokeWidth="1.400"><path d="M2 16A14 14 0 0 1 16 2M6 16A10 10 0 0 1 16 6M10 16a6 6 0 0 1 6-6" /><circle cx="14.500" cy="14.500" r="1.500" fill="#fff" /></svg></TrayItem>
          <TrayItem><svg width="22" height="18" fill="none" stroke="#fff" strokeWidth="1.300"><path d="M1 6.500h3.500L9 2.500v13L4.500 11.500H1zM12 6q2 3 0 6M15 4q3.500 5 0 10M18 2q5 7 0 14" /></svg></TrayItem>
          <TrayItem $w={38}><svg width="30" height="18" fill="none" stroke="#fff" strokeWidth="1.300"><rect x="1" y="1" width="28" height="16" /><path d="M4 5.500h22M4 9h22" strokeDasharray="2 2" /><path d="M7 13h16" /></svg></TrayItem>
          <TrayItem $w={32}>中</TrayItem>
          <TrayItem $w={37}><svg width="20" height="20"><path d="M1 3L17 0l3 15-16 5z" fill="#f4511e" /><path d="M14.500 5.500q-7-2-7 1.500 0 2 3.500 2.500t3.500 2.500q0 4-8 2" fill="none" stroke="#fff" strokeWidth="2.400" /></svg></TrayItem>
          <Clock>21:26<br />2019/9/23</Clock>
          <TrayItem $w={40}><svg width="21" height="22" fill="none" stroke="#fff" strokeWidth="1.300"><path d="M1 2h19v15h-6.500l-3 3v-3H1z" /></svg></TrayItem>
          <svg width="18" height="50"><path d="M16.500 0V50" stroke="#777" /></svg>
        </Tray>
      </TaskBar>

      <GifWindow>
        <GifTitle>
          <CamIcon s={17} />
          <GifName>GifCam 292x233</GifName>
          <GifButtons>
            <WinMin />
            <svg width="13" height="13"><rect x=".5" y=".5" width="11" height="11" fill="none" stroke="#ccc" /></svg>
            <svg width="13" height="13"><path d="M.5 .5l12 12M12.500 .5l-12 12" stroke="#000" strokeWidth="1.100" /></svg>
          </GifButtons>
        </GifTitle>
        <GifBody>
          <GifView />
          <GifSide>
            <GifBtn $on><GifLabel>停止</GifLabel><SplitMark><Tri w={11} h={6} /></SplitMark></GifBtn>
            <GifBtn><GifLabel>单帧</GifLabel></GifBtn>
            <GifBtn><GifLabel>编辑</GifLabel></GifBtn>
            <GifBtn><GifLabel>保存</GifLabel><SplitMark><Tri w={11} h={6} /></SplitMark></GifBtn>
          </GifSide>
        </GifBody>
      </GifWindow>
      <Ball>31</Ball>
    </Screen>
  );
}
